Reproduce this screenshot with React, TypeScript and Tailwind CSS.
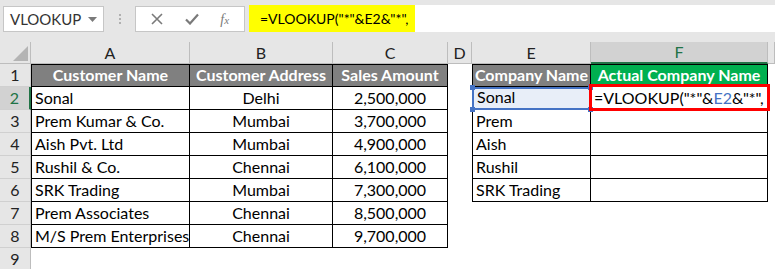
import React from 'react';

// customer table A1:C8, lookup table E1:F6
const customers = [
    { name: 'Sonal', city: 'Delhi', sales: '2,500,000' },
    { name: 'Prem Kumar & Co.', city: 'Mumbai', sales: '3,700,000' },
    { name: 'Aish Pvt. Ltd', city: 'Mumbai', sales: '4,900,000' },
    { name: 'Rushil & Co.', city: 'Chennai', sales: '6,100,000' },
    { name: 'SRK Trading', city: 'Mumbai', sales: '7,300,000' },
    { name: 'Prem Associates', city: 'Chennai', sales: '8,500,000' },
    { name: 'M/S Prem Enterprises', city: 'Chennai', sales: '9,700,000' },
];

const companies = ['Sonal', 'Prem', 'Aish', 'Rushil', 'SRK Trading'];

const cols = ['A', 'B', 'C', 'D', 'E', 'F', ''];

function FormulaBar() {
    return (
        <div className="h-[42px] bg-[#e6e6e6] flex items-start pt-[5px]">
            <div className="ml-[3px] mt-[1px] w-[101px] h-[26px] bg-white border border-[#c6c6c6] flex items-center justify-between pl-[6px] pr-[6px]">
                <span className="text-[15px] text-[#333]">VLOOKUP</span>
                <svg width="9" height="5" viewBox="0 0 9 5"><polygon points="0,0 9,0 4.5,5" fill="#7a7a7a" /></svg>
            </div>
            <div className="w-[31px] h-[28px] flex flex-col items-center justify-center gap-[2px]">
                <span className="w-[2px] h-[2px] bg-[#b0b0b0]" />
                <span className="w-[2px] h-[2px] bg-[#b0b0b0]" />
                <span className="w-[2px] h-[2px] bg-[#b0b0b0]" />
            </div>
            <div className="mt-[1px] w-[110px] h-[26px] bg-white border border-[#c6c6c6] flex items-center justify-around px-[4px]">
                <svg width="12" height="12" viewBox="0 0 12 12"><path d="M1 1L11 11M11 1L1 11" stroke="#7a7a7a" strokeWidth="1.6" /></svg>
                <svg width="14" height="12" viewBox="0 0 14 12"><path d="M1 6.5L5 10.5L13 1.5" stroke="#7a7a7a" strokeWidth="2.2" fill="none" /></svg>
                <span className="text-[14px] italic text-[#7a7a7a] font-['Liberation_Serif',serif]">f<span className="text-[11px]">x</span></span>
            </div>
            <div className="ml-[4px] flex-1 h-[27px] bg-white flex">
                <div className="w-[166px] bg-[#ffff00] flex items-center pl-[11px] text-[14px] text-black">=VLOOKUP("*"&amp;E2&amp;"*",</div>
            </div>
        </div>
    );
}

function Cell({ className, children }: { className?: string; children?: React.ReactNode }) {
    return <div className={'flex items-end pb-[1px] text-[16px] leading-[20px] overflow-visible whitespace-nowrap ' + (className ?? '')}>{children}</div>;
}

export default function App() {
    return (
        <div className="w-[775px] h-[269px] overflow-hidden bg-white font-['Lato',sans-serif] text-black">
            <FormulaBar />
            <div className="grid grid-cols-[31px_159px_143px_115px_24px_119px_177px_1fr] grid-rows-[22px] auto-rows-[23px]">
                {/* column headers */}
                <div className="bg-[#e6e6e6] border-r border-b border-[#bdbdbd] flex items-end justify-end p-[2px]">
                    <svg width="15" height="15" viewBox="0 0 15 15"><polygon points="15,0 15,15 0,15" fill="#b4b4b4" /></svg>
                </div>
                {cols.map((c, i) => (
                    <div
                        key={i}
                        className={
                            c === 'F'
                                ? 'bg-[#d2d2d2] border-r border-b-2 border-r-[#bdbdbd] border-b-[#217346] flex items-center justify-center text-[16px] text-[#217346]'
                                : 'bg-[#e6e6e6] border-r border-b border-[#bdbdbd] flex items-center justify-center text-[16px] text-[#222]'
                        }
                    >
                        {c}
                    </div>
                ))}

                {/* row 1: table headers */}
                <div className="bg-[#e6e6e6] border-r border-b border-[#d0d0d0] flex items-center justify-center text-[16px] text-[#222]">1</div>
                <Cell className="bg-[#808080] text-white font-bold justify-center border border-black">Customer Name</Cell>
                <Cell className="bg-[#808080] text-white font-bold justify-center border-y border-r border-black">Customer Address</Cell>
                <Cell className="bg-[#808080] text-white font-bold justify-center border-y border-r border-black">Sales Amount</Cell>
                <div />
                <Cell className="bg-[#808080] text-white font-bold justify-center border border-black">Company Name</Cell>
                <Cell className="bg-[#00b050] text-white font-bold justify-center border-y border-r border-black">Actual Company Name</Cell>
                <div />

                {Array.from({ length: 8 }).map((_, r) => {
                    const rowNo = r + 2;
                    const cust = customers[r];
                    const comp = companies[r];
                    const selected = rowNo === 2;
                    return (
                        <React.Fragment key={rowNo}>
                            <div
                                className={
                                    selected
                                        ? 'bg-[#d2d2d2] border-r-2 border-b border-r-[#217346] border-b-[#d0d0d0] flex items-center justify-center text-[16px] text-[#217346]'
                                        : 'bg-[#e6e6e6] border-r border-b border-r-[#bdbdbd] border-b-[#d0d0d0] flex items-center justify-center text-[16px] text-[#222]'
                                }
                            >
                                {rowNo}
                            </div>
                            {cust ? (
                                <>
                                    <Cell className="pl-[3px] border-x border-b border-black">{cust.name}</Cell>
                                    <Cell className="justify-center border-r border-b border-black">{cust.city}</Cell>
                                    <Cell className="justify-center border-r border-b border-black">{cust.sales}</Cell>
                                </>
                            ) : (
                                <>
                                    <div />
                                    <div />
                                    <div />
                                </>
                            )}
                            <div />
                            {comp ? (
                                selected ? (
                                    <>
                                        <Cell className="relative pl-[3px] bg-[#e8eef8] border-2 border-[#4472c4]">
                                            {comp}
                                            <span className="absolute -left-[4px] -top-[4px] w-[5px] h-[5px] bg-[#4472c4]" />
                                            <span className="absolute -right-[4px] -top-[4px] w-[5px] h-[5px] bg-[#4472c4]" />
                                            <span className="absolute -left-[4px] -bottom-[4px] w-[5px] h-[5px] bg-[#4472c4]" />
                                            <span className="absolute -right-[4px] -bottom-[4px] w-[5px] h-[5px] bg-[#4472c4]" />
                                        </Cell>
                                        <Cell className="relative pl-[3px] border-r border-b border-black">
                                            <span>
                                                =VLOOKUP("*"&amp;<span className="text-[#4472c4]">E2</span>&amp;"*",
                                            </span>
                                            <span className="absolute -left-[2px] -top-[3px] -right-[3px] -bottom-[2px] border-[3px] border-[#ff0000]" />
                                        </Cell>
                                    </>
                                ) : (
                                    <>
                                        <Cell className="pl-[3px] border-x border-b border-black">{comp}</Cell>
                                        <Cell className="border-r border-b border-black" />
                                    </>
                                )
                            ) : (
                                <>
                                    <div />
                                    <div />
                                </>
                            )}
                            <div />
                        </React.Fragment>
                    );
                })}
            </div>
        </div>
    );
}
